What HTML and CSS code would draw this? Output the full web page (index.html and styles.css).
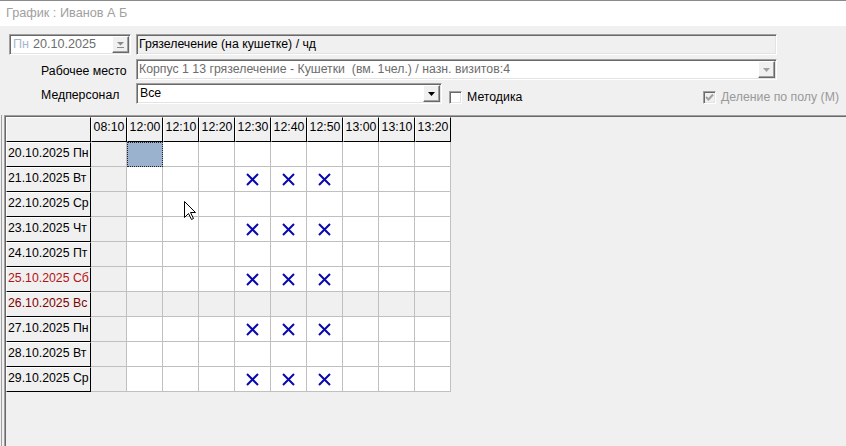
FILE: index.html
```html
<!DOCTYPE html>
<html lang="ru">
<head>
    <meta charset="UTF-8">
    <title>График</title>
    <link rel="stylesheet" href="styles.css">
</head>
<body>
    <div class="titlebar">График : Иванов А Б</div>

    <div class="form">
        <div class="row first">
            <div class="datebox sunken">
                <span class="dow">Пн</span>
                <span class="date">20.10.2025</span>
                <span class="dd-btn date-btn">
                    <svg width="7" height="6" viewBox="0 0 7 6"><polygon points="0,0 7,0 3.5,3.5" fill="#8a8a8a"/><rect x="0" y="5" width="7" height="1" fill="#8a8a8a"/></svg>
                </span>
            </div>
            <div class="field readonly sunken">Грязелечение (на кушетке) / чд</div>
        </div>
        <div class="row">
            <label class="lead">Рабочее место</label>
            <div class="combo wide disabled sunken">
                <span class="combo-text">Корпус 1 13 грязелечение - Кушетки  (вм. 1чел.) / назн. визитов:4</span>
                <span class="dd-btn"><svg width="7" height="4" viewBox="0 0 7 4"><polygon points="0,0 7,0 3.5,4" fill="#a0a0a0"/></svg></span>
            </div>
        </div>
        <div class="row third">
            <label class="lead">Медперсонал</label>
            <div class="combo narrow sunken">
                <span class="combo-text">Все</span>
                <span class="dd-btn"><svg width="7" height="4" viewBox="0 0 7 4"><polygon points="0,0 7,0 3.5,4" fill="#000"/></svg></span>
            </div>
            <label class="check method"><span class="box sunken"></span>Методика</label>
            <label class="check gender disabled"><span class="box sunken"><svg width="9" height="9" viewBox="0 0 9 9"><polyline points="1,4 3.5,6.5 8,1.5" fill="none" stroke="#a0a0a0" stroke-width="2"/></svg></span>Деление по полу (М)</label>
        </div>
    </div>

    <div class="panel">
        <div class="schedule">
            <div class="grid" id="grid"></div>
        </div>
    </div>

    <svg class="cursor" width="13" height="20" viewBox="0 0 13 20"><path d="M0.5 0.5 V16.5 L4.5 12.5 L7.5 18.5 L9.5 17.5 L6.5 11.5 H11.5 Z" fill="#fff" stroke="#000" stroke-width="1"/></svg>

    <script>
        const times = ['08:10', '12:00', '12:10', '12:20', '12:30', '12:40', '12:50', '13:00', '13:10', '13:20'];
        const days = [
            { label: '20.10.2025 Пн', busy: false },
            { label: '21.10.2025 Вт', busy: true },
            { label: '22.10.2025 Ср', busy: false },
            { label: '23.10.2025 Чт', busy: true },
            { label: '24.10.2025 Пт', busy: false },
            { label: '25.10.2025 Сб', busy: true, kind: 'sat' },
            { label: '26.10.2025 Вс', busy: false, kind: 'sun' },
            { label: '27.10.2025 Пн', busy: true },
            { label: '28.10.2025 Вт', busy: false },
            { label: '29.10.2025 Ср', busy: true }
        ];
        const cross = '<svg width="13" height="13" viewBox="0 0 13 13"><path d="M1 1 L12 12 M12 1 L1 12" stroke="#0808b0" stroke-width="2"/></svg>';

        let html = '<div class="fixed corner"></div>';
        times.forEach(t => { html += `<div class="fixed head">${t}</div>`; });
        days.forEach((day, r) => {
            html += `<div class="fixed day ${day.kind || ''}">${day.label}</div>`;
            times.forEach((t, c) => {
                let cls = 'cell';
                if (c === 0 || day.kind === 'sun') cls += ' off';
                if (r === 0 && c === 1) cls += ' selected';
                const mark = day.busy && c >= 4 && c <= 6 ? cross : '';
                html += `<div class="${cls}">${mark}</div>`;
            });
        });
        document.getElementById('grid').innerHTML = html;
    </script>
</body>
</html>
```

FILE: styles.css
```css
body {
    margin: 0;
    width: 846px;
    height: 446px;
    overflow: hidden;
    background: #f0f0f0;
    font-family: "Liberation Sans", Arial, sans-serif;
    font-size: 12.3px;
    color: #000;
}
.titlebar {
    height: 25px;
    line-height: 24px;
    padding-left: 6px;
    background: #fff;
    border-top: 1px solid #8a8a8a;
    color: #a0a0a0;
    font-size: 12.7px;
}
.sunken {
    box-sizing: border-box;
    border: 1px solid;
    border-color: #a0a0a0 #fff #fff #a0a0a0;
    box-shadow: inset 1px 1px #696969, inset -1px -1px #e3e3e3;
}
.form {
    padding-left: 9px;
}
.row {
    display: flex;
    height: 21px;
    margin-top: 4px;
}
.row.first { margin-top: 8px; }
.row.third { margin-top: 3px; }
.lead {
    width: 90px;
    padding: 3px 0 0 32px;
    margin-right: 5px;
    line-height: 18px;
    white-space: nowrap;
}
.datebox {
    width: 122px;
    height: 21px;
    margin-right: 5px;
    background: #fff;
    display: flex;
    align-items: center;
    padding-left: 3px;
    line-height: 17px;
    font-size: 12.6px;
}
.dow {
    color: #a8b6cc;
    width: 20px;
}
.date {
    color: #6d6d6d;
    flex: 1;
}
.field {
    width: 641px;
    height: 21px;
    padding-left: 2px;
    line-height: 19px;
}
.readonly {
    background: #f0f0f0;
}
.combo {
    display: flex;
    height: 21px;
    background: #fff;
    line-height: 19px;
}
.combo.wide { width: 641px; }
.combo.narrow { width: 306px; }
.combo-text {
    flex: 1;
    padding-left: 3px;
    white-space: pre;
    overflow: hidden;
}
.combo.disabled .combo-text {
    color: #6d6d6d;
    padding-left: 2px;
}
.dd-btn {
    box-sizing: border-box;
    width: 17px;
    height: 17px;
    margin: 1px 1px 0 0;
    display: flex;
    align-items: center;
    justify-content: center;
    background: #f0f0f0;
    border: 1px solid;
    border-color: #fff #696969 #696969 #fff;
    box-shadow: inset -1px -1px #a0a0a0;
}
.date-btn {
    margin: 0 1px 0 0;
}
.check {
    align-self: flex-end;
    display: flex;
    align-items: center;
    gap: 5px;
    height: 13px;
    line-height: 13px;
    white-space: nowrap;
}
.check .box {
    width: 13px;
    height: 13px;
    background: #fff;
    display: flex;
    align-items: center;
    justify-content: center;
}
.method {
    margin-left: 7px;
}
.gender {
    margin-left: auto;
    margin-right: 7px;
    color: #999;
}
.gender .box {
    background: #f0f0f0;
}
.panel {
    margin: 11px 0 0 1px;
    padding-left: 2px;
    border-left: 1px solid #a0a0a0;
}
.schedule {
    height: 340px;
    padding: 1px 0 0 1px;
    border-top: 1px solid #a0a0a0;
    border-left: 1px solid #a0a0a0;
    box-shadow: inset 1px 1px #696969;
}
.grid {
    display: grid;
    grid-template-columns: 85px repeat(10, 36px);
    grid-auto-rows: 25px;
    width: max-content;
}
.fixed {
    box-sizing: border-box;
    background: #f0f0f0;
    border-top: 1px solid #fff;
    border-left: 1px solid #fff;
    border-right: 1px solid #000;
    border-bottom: 1px solid #000;
    padding-top: 1px;
    line-height: 16px;
    white-space: nowrap;
    overflow: hidden;
}
.head {
    text-align: center;
}
.day {
    padding-left: 1px;
    padding-top: 2px;
}
.day.sat { color: #b41414; }
.day.sun { color: #800000; }
.cell {
    box-sizing: border-box;
    background: #fff;
    border-right: 1px solid #c0c0c0;
    border-bottom: 1px solid #c0c0c0;
    display: flex;
    align-items: center;
    justify-content: center;
}
.cell.off {
    background: #f0f0f0;
}
.cell.selected {
    background: #9bb2cf;
    border-color: #9bb2cf;
    outline: 1px dotted #222;
    outline-offset: -1px;
}
.cursor {
    position: absolute;
    left: 184px;
    top: 201px;
}
```
